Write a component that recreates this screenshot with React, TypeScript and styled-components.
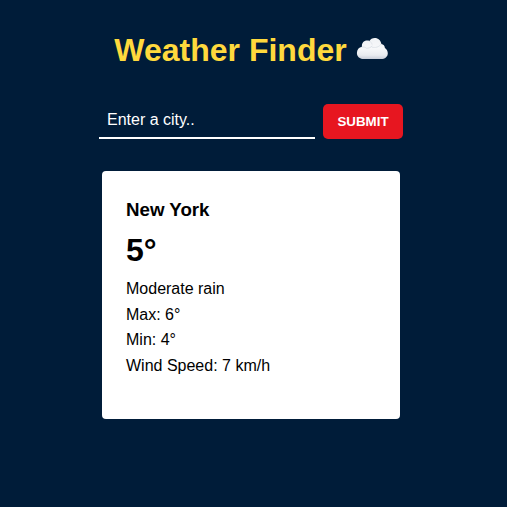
import React from 'react';
import styled, { createGlobalStyle } from 'styled-components';

const GlobalStyle = createGlobalStyle`
  * { box-sizing: border-box; margin: 0; padding: 0; }
  body { background: #001c39; font-family: "Liberation Sans", Arial, sans-serif; }
`;

const Page = styled.main`
  min-height: 100vh;
  display: flex;
  flex-direction: column;
  align-items: center;
  padding: 32px 5px 0 0;
`;

const Title = styled.h1`
  display: flex;
  align-items: center;
  gap: 9px;
  height: 37px;
  color: #ffd93d;
  font-size: 32px;
  line-height: 37px;
  white-space: nowrap;
`;

const CloudIcon = styled.svg`
  width: 32px;
  height: 24px;
  margin-top: -5px;
`;

const SearchForm = styled.form`
  display: flex;
  gap: 8px;
  height: 35px;
  margin-top: 35px;
`;

const CityInput = styled.input`
  width: 216px;
  height: 35px;
  padding: 0 8px 2px;
  border: 0;
  border-bottom: 2px solid #fff;
  outline: 0;
  background: transparent;
  color: #fff;
  font: 16px "Liberation Sans", Arial, sans-serif;
  &::placeholder { color: #fff; opacity: 1; }
`;

const SubmitButton = styled.button`
  width: 80px;
  height: 35px;
  border: 0;
  border-radius: 5px;
  background: #e71620;
  color: #fff;
  font: bold 13.333px "Liberation Sans", Arial, sans-serif;
`;

const Card = styled.section`
  width: 298px;
  height: 248px;
  margin-top: 32px;
  padding: 26px 24px;
  border-radius: 4px;
  background: #fff;
  color: #000;
`;

const City = styled.h2`
  font-size: 18.72px;
  line-height: 26px;
`;

const Temperature = styled.p`
  margin: 7px 0 5px;
  font-size: 32px;
  font-weight: bold;
  line-height: 41px;
`;

const Detail = styled.p`
  font-size: 16px;
  line-height: 25.6px;
`;

const details = ['Moderate rain', 'Max: 6°', 'Min: 4°', 'Wind Speed: 7 km/h'];

function Cloud() {
  return (
    <CloudIcon viewBox="0 0 32 24" aria-hidden="true">
      <defs>
        <linearGradient id="cloudBody" x1="0" y1="0" x2="0" y2="1">
          <stop offset="0" stopColor="#f0f2f5" />
          <stop offset="0.5" stopColor="#f7f8fa" />
          <stop offset="0.82" stopColor="#e9ebf0" />
          <stop offset="1" stopColor="#c8cdd9" />
        </linearGradient>
      </defs>
      <path
        d="M8 23C3.8 23 0.9 20.5 0.9 16.9C0.9 13.8 2.9 11.4 6 10.8C5.4 7.3 7.7 4.6 11.2 4.6C12.2 4.6 12.9 4.7 13.5 5C14.5 3 16.3 1.9 18.7 1.9C22.3 1.9 25 4.4 25.3 8C27.5 8.4 28.8 9.8 28.9 12C30.7 13.2 31.8 15 31.8 17.2C31.8 20.7 29 23 25 23Z"
        fill="url(#cloudBody)"
      />
      <path
        d="M13.5 5.3C15.1 5.9 15.9 7 16 8.2M16.2 11.2C19.3 12 23 11.3 25 8.2M6 11.1C7.6 10.7 9.1 11.1 10.3 12.2C12.3 12.4 14.8 11.7 16 10.1"
        fill="none"
        stroke="#dde1e8"
        strokeWidth="0.9"
        strokeLinecap="round"
      />
    </CloudIcon>
  );
}

export default function App() {
  return (
    <>
      <GlobalStyle />
      <Page>
        <Title>
          Weather Finder
          <Cloud />
        </Title>
        <SearchForm onSubmit={(e) => e.preventDefault()}>
          <CityInput placeholder="Enter a city.." />
          <SubmitButton type="submit">SUBMIT</SubmitButton>
        </SearchForm>
        <Card>
          <City>New York</City>
          <Temperature>5°</Temperature>
          {details.map((d) => <Detail key={d}>{d}</Detail>)}
        </Card>
      </Page>
    </>
  );
}
